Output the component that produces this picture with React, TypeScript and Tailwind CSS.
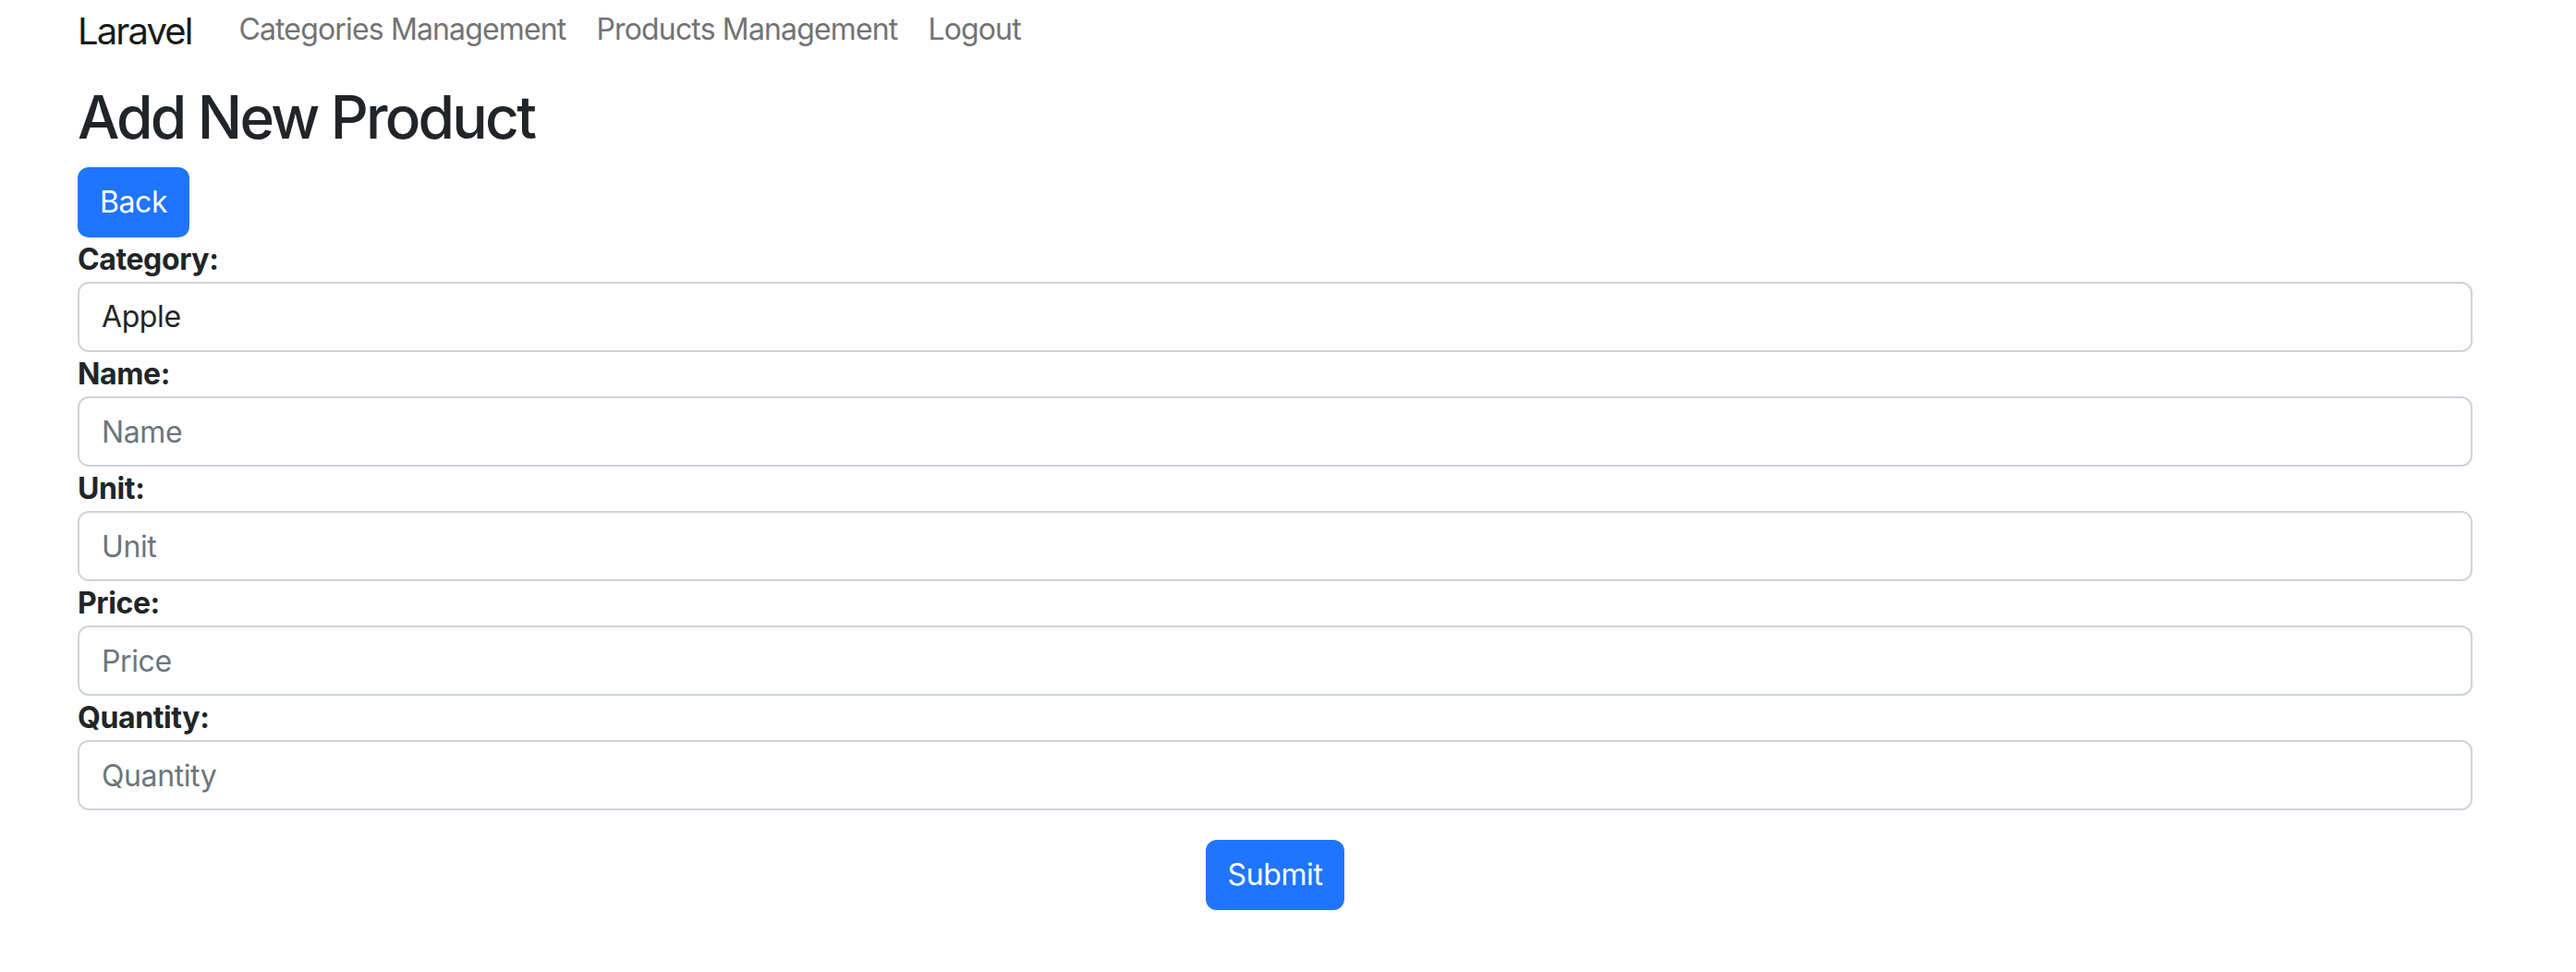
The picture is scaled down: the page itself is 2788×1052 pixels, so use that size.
import React from "react";

const fields = [
  { label: "Name:", placeholder: "Name" },
  { label: "Unit:", placeholder: "Unit" },
  { label: "Price:", placeholder: "Price" },
  { label: "Quantity:", placeholder: "Quantity" },
];

export default function App() {
  return (
    <div className="min-h-screen w-full bg-white text-[#212529] font-['Inter','Noto_Sans',sans-serif]">
      <div className="pl-[84px] pr-[112px]">
        <nav className="flex h-[88px] items-start">
          <a className="mt-[4px] text-[40px] leading-[60px] text-[#1a1a1a] tracking-[-1.9px]">Laravel</a>
          <div className="ml-[51px] mt-[8px] flex gap-[33px] text-[32px] leading-[48px] text-[#737373] tracking-[-0.85px]">
            <a>Categories Management</a>
            <a>Products Management</a>
            <a>Logout</a>
          </div>
        </nav>
        <h2 className="text-[64px] font-medium leading-[77px] mb-[16px] tracking-[-2.8px]">Add New Product</h2>
        <div>
          <button className="h-[76px] rounded-[12px] bg-[#1f75fe] px-[24px] text-[32px] leading-[48px] text-white tracking-[-0.4px]">
            Back
          </button>
        </div>
        <form className="flex flex-col">
          <label className="text-[32px] font-bold leading-[48px] tracking-[-0.4px]">Category:</label>
          <div className="flex h-[76px] items-center rounded-[12px] border-2 border-[#ced4da] px-[24px] text-[32px] tracking-[-0.4px] text-[#212529]">
            Apple
          </div>
          {fields.map((f) => (
            <React.Fragment key={f.label}>
              <label className="text-[32px] font-bold leading-[48px] tracking-[-0.4px]">{f.label}</label>
              <input
                placeholder={f.placeholder}
                className="h-[76px] w-full rounded-[12px] border-2 border-[#ced4da] px-[24px] text-[32px] tracking-[-0.4px] outline-none placeholder:text-[#6c757d]"
              />
            </React.Fragment>
          ))}
          <div className="mt-[32px] flex justify-center">
            <button
              type="button"
              className="h-[76px] rounded-[12px] bg-[#1f75fe] px-[24px] text-[32px] leading-[48px] text-white tracking-[-0.4px]"
            >
              Submit
            </button>
          </div>
        </form>
      </div>
    </div>
  );
}
